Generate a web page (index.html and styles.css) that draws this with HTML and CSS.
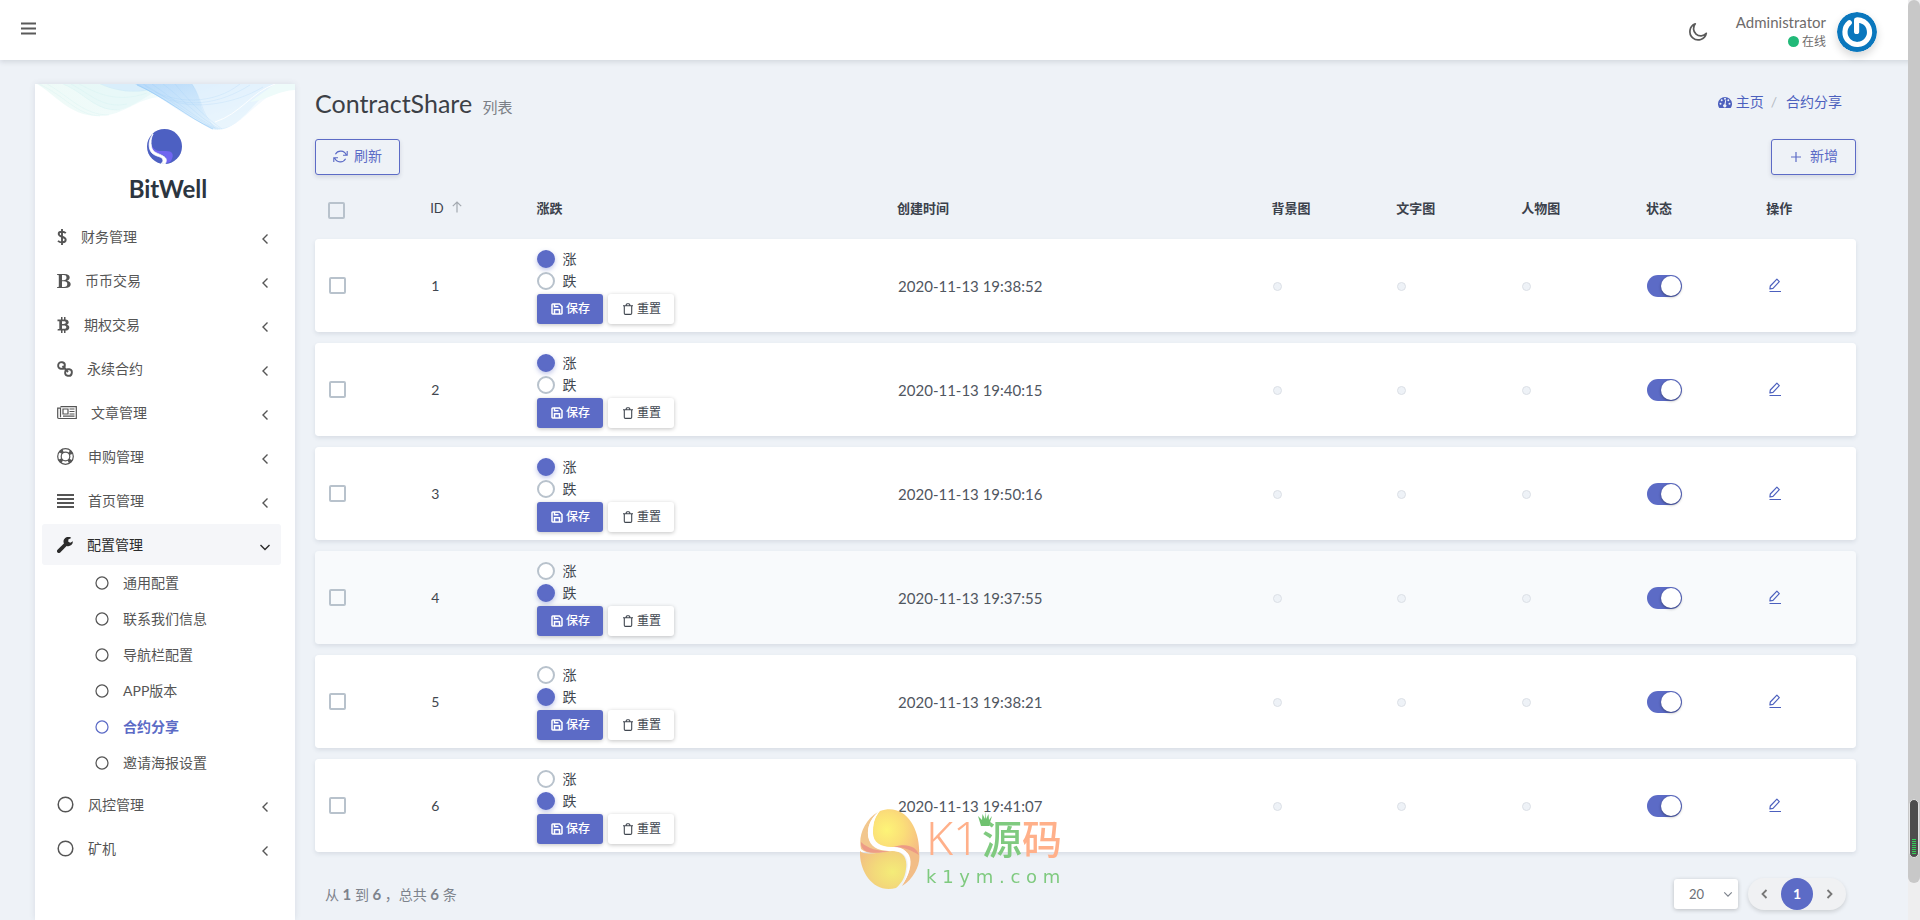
FILE: index.html
```html
<!DOCTYPE html>
<html lang="zh-CN">
<head>
<meta charset="utf-8">
<meta name="viewport" content="width=device-width, initial-scale=1">
<title>ContractShare</title>
<link rel="stylesheet" href="styles.css">
</head>
<body>
<svg class="sprite" aria-hidden="true">
  <symbol id="i-left" viewBox="0 0 12 12"><path d="M8.5 1.5 4 6l4.5 4.5" fill="none" stroke="currentColor" stroke-width="1.4"/></symbol>
  <symbol id="i-down" viewBox="0 0 12 12"><path d="M1.5 4 6 8.5 10.500 4" fill="none" stroke="currentColor" stroke-width="1.4"/></symbol>
  <symbol id="i-circle" viewBox="0 0 17 17"><circle cx="8.500" cy="8.500" r="7.300" fill="none" stroke="currentColor" stroke-width="1.5"/></symbol>
  <symbol id="i-save" viewBox="0 0 12 12"><path d="M1.700 1h6.800L11 3.500v6.800a.7.7 0 0 1-.7.7H1.700a.7.7 0 0 1-.7-.7V1.700A.7.7 0 0 1 1.700 1zM3.500 11V6.800h5V11M3.500 1v2.800h4" fill="none" stroke="currentColor" stroke-width="1.5"/></symbol>
  <symbol id="i-trash" viewBox="0 0 12 12"><path d="M1 2.800h10M2.300 2.800v7.500q0 1.100 1.100 1.100h5.200q1.100 0 1.100-1.100V2.800M4.200 2.600V1.800q0-1 1-1h1.600q1 0 1 1v.8" fill="none" stroke="currentColor" stroke-width="1.100"/></symbol>
  <symbol id="i-edit" viewBox="0 0 14 15"><path d="M8.900 1.200 11.300 3.600 5 10.300 1.900 11 2.300 8zM1.500 13.500h11.500" fill="none" stroke="currentColor" stroke-width="1.200" stroke-linejoin="round"/></symbol>
</svg>

<header class="topbar">
  <button class="icon-btn" type="button" aria-label="菜单">
    <svg width="15" height="13" viewBox="0 0 15 13"><path d="M0 1.500h15M0 6.500h15M0 11.500h15" stroke="currentColor" stroke-width="2"/></svg>
  </button>
  <div class="topbar-right">
    <button class="icon-btn" type="button" aria-label="夜间模式">
      <svg width="20" height="20" viewBox="0 0 20 20"><path d="M7.300 1.800A8.300 8.300 0 1 0 18.300 11.300 6.600 6.600 0 0 1 7.300 1.800z" fill="none" stroke="currentColor" stroke-width="1.700" stroke-linejoin="round"/></svg>
    </button>
    <div class="user">
      <span class="user-name">Administrator</span>
      <span class="user-status"><i class="dot"></i>在线</span>
    </div>
    <svg class="avatar" width="40" height="40" viewBox="0 0 40 40"><circle cx="20" cy="20" r="20" fill="#0a77bd"/><path d="M12.300 10.800A12.300 12.300 0 1 0 27 9.900Q22.500 7.500 19.600 8v11.500" fill="none" stroke="#fff" stroke-width="5.200" stroke-linecap="round" stroke-linejoin="round"/></svg>
  </div>
</header>

<div class="layout">
  <aside class="sidebar">
    <svg class="waves" viewBox="0 0 260 48" preserveAspectRatio="none" aria-hidden="true">
      <defs>
        <linearGradient id="wb" x1="0" y1="0" x2="1" y2="1"><stop offset="0" stop-color="#b7dafa"/><stop offset=".6" stop-color="#d9edfc"/><stop offset="1" stop-color="#e8f5fe"/></linearGradient>
        <linearGradient id="wg" x1="0" y1="0" x2="1" y2="0"><stop offset="0" stop-color="#eefaf7"/><stop offset="1" stop-color="#f3fcfe"/></linearGradient>
      </defs>
      <path d="M2 0C20 10 35 33 65 32 90 31 100 15 125 13L180 10V0z" fill="url(#wg)"/>
      <path d="M28 0C50 9 60 27 82 26 100 24 112 9 130 4V0z" fill="#e4f6f6" opacity=".7"/>
      <path d="M65 0C85 9 100 9 120 5L130 0z" fill="#d9eefb"/>
      <path d="M100 0C125 12 150 30 176 45 206 52 222 6 248 0z" fill="url(#wb)"/>
      <path d="M157 0C167 14 163 26 179 43 206 52 222 6 260 2V0z" fill="#eef8fe" opacity=".65"/>
      <path d="M215 18C235 15 242 7 260 6V0h-20z" fill="#eefbfa"/>
      <g fill="none" stroke="#8cc2f3" stroke-width=".6" opacity=".28"><path d="M102 0C130 14 150 34 179 44M108 0C134 14 154 32 181 45M117 0C140 16 160 34 183 45M128 0C145 12 163 34 185 45M140 0C150 12 168 32 187 45M110 2C140 22 180 20 205 0M120 8C150 26 185 20 215 1M135 16C160 26 200 20 228 3M157 0C167 14 165 28 180 44"/></g>
      <path d="M102 1C130 13 152 33 178 45" fill="none" stroke="#8cc6f6" stroke-width=".8" opacity=".7"/>
      <g fill="none" stroke="#bce8e6" stroke-width=".5" opacity=".35"><path d="M4 0C30 12 42 31 65 32M12 0C34 12 48 31 74 31M28 0C50 9 60 27 85 26M36 0C55 10 68 25 92 20M44 0C60 8 80 20 112 9M65 0C88 10 112 9 130 1"/></g>
      <path d="M180 38C205 30 217 8 240 0" fill="none" stroke="#fff" stroke-width="1" opacity=".9"/>
    </svg>
    <a class="brand" href="#">
      <svg width="35" height="35" viewBox="0 0 35 35"><circle cx="17.500" cy="17.500" r="17.500" fill="#4d60c2"/><path d="M5 17C8 23 14 22 19 22 25 22 28 25 24 32 22 34 20 34 18 34 22 26 15 26 10 24 6 22 5 20 5 17z" fill="#7065f0"/><path d="M6 5C1 11 1 20 5 24 9 28 15 27 16 31 16 33 15 34 14 34.600L18 35C20 32 20 29 16 27 11 24 6 24 4.500 18 3.500 13 4 9 6 5z" fill="#fff" stroke="#fff" stroke-width=".8"/></svg>
      <span>BitWell</span>
    </a>
    <nav>
      <ul class="menu">
        <li><a class="item" href="#"><svg width="10" height="18" viewBox="0 0 10 18"><path d="M8.800 5.200C7 3.300 1.700 3 1.700 6c0 3.300 7 2.200 7 5.700 0 3.200-5.500 3.300-7.700 1.200M5 1v16" fill="none" stroke="currentColor" stroke-width="1.900"/></svg><span>财务管理</span><svg class="arrow"><use href="#i-left"/></svg></a></li>
        <li><a class="item" href="#"><svg width="14" height="16" viewBox="0 0 14 16"><path d="M0 1h7.500C11 1 12.700 2.300 12.700 4.500c0 1.600-1 2.700-2.700 3.200 2.300.4 3.700 1.700 3.700 3.600C13.700 13.700 11.800 15 8 15H0v-.8l1.800-.4V2.200L0 1.800zM5 2v5.300h1.500c2 0 3-.9 3-2.700C9.500 2.800 8.600 2 6.700 2zm0 6.300V14h2c2.200 0 3.300-1 3.300-2.900S9.200 8.300 7 8.300z" fill="currentColor" fill-rule="evenodd"/></svg><span>币币交易</span><svg class="arrow"><use href="#i-left"/></svg></a></li>
        <li><a class="item" href="#"><svg width="13" height="16" viewBox="0 0 13 16"><path d="M4 0h1.500v2.500H7V0h1.500v2.600c2 .2 3.200 1.100 3.200 2.700 0 1.200-.7 2-1.700 2.400 1.500.4 2.300 1.300 2.300 2.700 0 2-1.400 3-3.800 3.200V16H7v-2.400H5.500V16H4v-2.400H.5l.3-1.700h1.500V4.300H.5V2.500H4zM5 4.300v2.700h1.500c1.500 0 2.300-.4 2.300-1.400S8 4.300 6.500 4.300zm0 4.300v3.200h1.800c1.600 0 2.500-.5 2.500-1.600S8.400 8.600 6.800 8.600z" fill="currentColor" fill-rule="evenodd"/></svg><span>期权交易</span><svg class="arrow"><use href="#i-left"/></svg></a></li>
        <li><a class="item" href="#"><svg width="16" height="16" viewBox="0 0 16 16"><g fill="none" stroke="currentColor" stroke-width="1.900"><rect x="1.200" y="1.200" width="6.600" height="6.600" rx="3" transform="rotate(8 4.500 4.500)"/><rect x="8.200" y="8.200" width="6.600" height="6.600" rx="3" transform="rotate(8 11.500 11.500)"/><path d="m5.500 5 5.500 6"/></g></svg><span>永续合约</span><svg class="arrow"><use href="#i-left"/></svg></a></li>
        <li><a class="item" href="#"><svg width="20" height="15" viewBox="0 0 20 15"><path d="M3.500 1.700h15.800V13.500H1.800Q.7 13.500.7 12.300V3.200h2.800v9" fill="none" stroke="currentColor" stroke-width="1.200"/><path d="M6 4h5v5H6zM12.500 4H17.500M12.500 6.500h5M12.500 9h5M6 11.200h11.500" fill="none" stroke="currentColor" stroke-width="1.200"/></svg><span>文章管理</span><svg class="arrow"><use href="#i-left"/></svg></a></li>
        <li><a class="item" href="#"><svg width="17" height="17" viewBox="0 0 17 17"><g fill="none" stroke="currentColor"><circle cx="8.500" cy="8.500" r="7.800" stroke-width="1.200"/><circle cx="8.500" cy="8.500" r="4.300" stroke-width="1.200"/><circle cx="8.500" cy="8.500" r="6.100" stroke-width="3.700" stroke-dasharray="3.300 6.282" stroke-dashoffset="-3.140"/></g></svg><span>申购管理</span><svg class="arrow"><use href="#i-left"/></svg></a></li>
        <li><a class="item" href="#"><svg width="17" height="15" viewBox="0 0 17 15"><path d="M0 2h17M0 6h17M0 10h17M0 14h17" stroke="currentColor" stroke-width="2"/></svg><span>首页管理</span><svg class="arrow"><use href="#i-left"/></svg></a></li>
        <li class="open">
          <a class="item" href="#"><svg width="16" height="16" viewBox="0 0 16 16"><path d="M1.900 14.100 9 7" stroke="currentColor" stroke-width="3.800" stroke-linecap="round"/><path d="M14.200.9 11.300 2.500v2.200l2 1.100 2.600-1.500A4.700 4.700 0 1 1 14.200.9z" fill="currentColor"/></svg><span>配置管理</span><svg class="arrow"><use href="#i-down"/></svg></a>
          <ul class="submenu">
            <li><a href="#"><svg><use href="#i-circle"/></svg><span>通用配置</span></a></li>
            <li><a href="#"><svg><use href="#i-circle"/></svg><span>联系我们信息</span></a></li>
            <li><a href="#"><svg><use href="#i-circle"/></svg><span>导航栏配置</span></a></li>
            <li><a href="#"><svg><use href="#i-circle"/></svg><span>APP版本</span></a></li>
            <li><a class="current" href="#"><svg><use href="#i-circle"/></svg><span>合约分享</span></a></li>
            <li><a href="#"><svg><use href="#i-circle"/></svg><span>邀请海报设置</span></a></li>
          </ul>
        </li>
        <li><a class="item" href="#"><svg width="17" height="17"><use href="#i-circle"/></svg><span>风控管理</span><svg class="arrow"><use href="#i-left"/></svg></a></li>
        <li><a class="item" href="#"><svg width="17" height="17"><use href="#i-circle"/></svg><span>矿机</span><svg class="arrow"><use href="#i-left"/></svg></a></li>
      </ul>
    </nav>
  </aside>

  <main class="content">
    <div class="page-head">
      <h1>ContractShare <small>列表</small></h1>
      <nav class="crumbs" aria-label="breadcrumb">
        <a href="#"><svg width="14" height="12" viewBox="0 0 14 12"><path d="M1.300 12A7 7 0 1 1 12.700 12z" fill="currentColor"/><g fill="#eef2f7"><circle cx="2.500" cy="7.800" r="1"/><circle cx="3.700" cy="4.300" r="1"/><circle cx="7" cy="2.700" r="1"/><circle cx="10.300" cy="4.300" r="1"/><circle cx="11.500" cy="7.800" r="1"/><path d="m8.200 4.200-.6 4.200a1.600 1.600 0 1 1-1.200-.2L7.300 4z"/></g></svg>主页</a>
        <span class="sep">/</span>
        <a href="#">合约分享</a>
      </nav>
    </div>

    <div class="toolbar">
      <button class="btn-outline" type="button"><svg width="15" height="13" viewBox="0 0 15 13"><path d="M13.300 5A6 6 0 0 0 2.400 4.300M1.700 8a6 6 0 0 0 10.900.7M14.200 1v4.200h-4.200M.8 12V7.800H5" fill="none" stroke="currentColor" stroke-width="1.100"/></svg>刷新</button>
      <button class="btn-outline" type="button"><svg width="15" height="13" viewBox="0 0 15 13"><path d="M7 2v10M2 7h10" stroke="currentColor" stroke-width="1.200"/></svg>新增</button>
    </div>

    <table class="grid">
      <colgroup><col class="c-check"><col class="c-id"><col class="c-trend"><col class="c-time"><col class="c-img"><col class="c-img"><col class="c-img"><col class="c-state"><col class="c-act"></colgroup>
      <thead>
        <tr><th><input class="check" type="checkbox" aria-label="全选"></th><th class="th-id">ID <svg width="10" height="12" viewBox="0 0 10 12"><path d="M5 11.500V1M.8 5.200 5 1l4.200 4.200" fill="none" stroke="#a3a9b0" stroke-width="1.200"/></svg></th><th>涨跌</th><th>创建时间</th><th>背景图</th><th>文字图</th><th>人物图</th><th>状态</th><th>操作</th></tr>
      </thead>
      <tbody>
        <tr>
          <td><input class="check" type="checkbox" aria-label="选择 1"></td><td>1</td>
          <td><form class="trend"><label><input type="radio" name="t1" checked>涨</label><label><input type="radio" name="t1">跌</label><div class="acts"><button class="btn-save" type="button"><svg><use href="#i-save"/></svg>保存</button><button class="btn-reset" type="button"><svg><use href="#i-trash"/></svg>重置</button></div></form></td>
          <td class="time">2020-11-13 19:38:52</td><td><span class="thumb"></span></td><td><span class="thumb"></span></td><td><span class="thumb"></span></td>
          <td><input class="switch" type="checkbox" aria-label="状态" checked></td><td><a class="edit" href="#" aria-label="编辑"><svg><use href="#i-edit"/></svg></a></td>
        </tr>
        <tr>
          <td><input class="check" type="checkbox" aria-label="选择 2"></td><td>2</td>
          <td><form class="trend"><label><input type="radio" name="t2" checked>涨</label><label><input type="radio" name="t2">跌</label><div class="acts"><button class="btn-save" type="button"><svg><use href="#i-save"/></svg>保存</button><button class="btn-reset" type="button"><svg><use href="#i-trash"/></svg>重置</button></div></form></td>
          <td class="time">2020-11-13 19:40:15</td><td><span class="thumb"></span></td><td><span class="thumb"></span></td><td><span class="thumb"></span></td>
          <td><input class="switch" type="checkbox" aria-label="状态" checked></td><td><a class="edit" href="#" aria-label="编辑"><svg><use href="#i-edit"/></svg></a></td>
        </tr>
        <tr>
          <td><input class="check" type="checkbox" aria-label="选择 3"></td><td>3</td>
          <td><form class="trend"><label><input type="radio" name="t3" checked>涨</label><label><input type="radio" name="t3">跌</label><div class="acts"><button class="btn-save" type="button"><svg><use href="#i-save"/></svg>保存</button><button class="btn-reset" type="button"><svg><use href="#i-trash"/></svg>重置</button></div></form></td>
          <td class="time">2020-11-13 19:50:16</td><td><span class="thumb"></span></td><td><span class="thumb"></span></td><td><span class="thumb"></span></td>
          <td><input class="switch" type="checkbox" aria-label="状态" checked></td><td><a class="edit" href="#" aria-label="编辑"><svg><use href="#i-edit"/></svg></a></td>
        </tr>
        <tr class="hovered">
          <td><input class="check" type="checkbox" aria-label="选择 4"></td><td>4</td>
          <td><form class="trend"><label><input type="radio" name="t4">涨</label><label><input type="radio" name="t4" checked>跌</label><div class="acts"><button class="btn-save" type="button"><svg><use href="#i-save"/></svg>保存</button><button class="btn-reset" type="button"><svg><use href="#i-trash"/></svg>重置</button></div></form></td>
          <td class="time">2020-11-13 19:37:55</td><td><span class="thumb"></span></td><td><span class="thumb"></span></td><td><span class="thumb"></span></td>
          <td><input class="switch" type="checkbox" aria-label="状态" checked></td><td><a class="edit" href="#" aria-label="编辑"><svg><use href="#i-edit"/></svg></a></td>
        </tr>
        <tr>
          <td><input class="check" type="checkbox" aria-label="选择 5"></td><td>5</td>
          <td><form class="trend"><label><input type="radio" name="t5">涨</label><label><input type="radio" name="t5" checked>跌</label><div class="acts"><button class="btn-save" type="button"><svg><use href="#i-save"/></svg>保存</button><button class="btn-reset" type="button"><svg><use href="#i-trash"/></svg>重置</button></div></form></td>
          <td class="time">2020-11-13 19:38:21</td><td><span class="thumb"></span></td><td><span class="thumb"></span></td><td><span class="thumb"></span></td>
          <td><input class="switch" type="checkbox" aria-label="状态" checked></td><td><a class="edit" href="#" aria-label="编辑"><svg><use href="#i-edit"/></svg></a></td>
        </tr>
        <tr>
          <td><input class="check" type="checkbox" aria-label="选择 6"></td><td>6</td>
          <td><form class="trend"><label><input type="radio" name="t6">涨</label><label><input type="radio" name="t6" checked>跌</label><div class="acts"><button class="btn-save" type="button"><svg><use href="#i-save"/></svg>保存</button><button class="btn-reset" type="button"><svg><use href="#i-trash"/></svg>重置</button></div></form></td>
          <td class="time">2020-11-13 19:41:07</td><td><span class="thumb"></span></td><td><span class="thumb"></span></td><td><span class="thumb"></span></td>
          <td><input class="switch" type="checkbox" aria-label="状态" checked></td><td><a class="edit" href="#" aria-label="编辑"><svg><use href="#i-edit"/></svg></a></td>
        </tr>
      </tbody>
    </table>

    <footer class="pager">
      <p>从 <b>1</b> 到 <b>6</b> ，总共 <b>6</b> 条</p>
      <div class="pager-right">
        <span class="select"><select aria-label="每页条数"><option>20</option></select><svg><use href="#i-down"/></svg></span>
        <div class="pages">
          <a href="#" aria-label="上一页"><svg width="9" height="10" viewBox="0 0 9 10"><path d="M6.500 1 2.500 5l4 4" fill="none" stroke="currentColor" stroke-width="1.800"/></svg></a>
          <a class="on" href="#">1</a>
          <a href="#" aria-label="下一页"><svg width="9" height="10" viewBox="0 0 9 10"><path d="m2.500 1 4 4-4 4" fill="none" stroke="currentColor" stroke-width="1.800"/></svg></a>
        </div>
      </div>
    </footer>
  </main>
</div>

<div class="mark">
  <svg width="60" height="80" viewBox="0 0 60 80">
    <defs>
      <radialGradient id="e1" cx=".3" cy=".45" r=".8"><stop offset="0" stop-color="#fdf477"/><stop offset=".45" stop-color="#fbdf78"/><stop offset="1" stop-color="#f6bb84"/></radialGradient>
      <radialGradient id="e2" cx=".7" cy=".55" r=".8"><stop offset="0" stop-color="#f4ec78"/><stop offset=".5" stop-color="#f3d97a"/><stop offset="1" stop-color="#f2c083"/></radialGradient>
    </defs>
    <path d="M18 3C4 11-2 28 1 40 9 47 23 43 36 42 20 41 8 37 8 24 8 14 13 8 18 3z" fill="#f2c78e"/>
    <path d="M20 2C45-7 61 20 59 46 56 37 45 36 34 38 22 39 12 34 13 22 13 12 16 6 20 2z" fill="url(#e1)"/>
    <path d="M0 42C5 47 20 43 32 42 42 42 48 48 46 60 45 69 41 75 36 79 13 85-1 62 0 42z" fill="url(#e2)"/>
    <path d="M30 38C44 36 51 45 50 57 49 66 45 72 42 77 55 69 61 54 59 44 55 36 44 35 30 38z" fill="#f2bd87"/>
    <path d="M1 36C3 46 18 44 30 42.500 18 42 8 40 1 33zM34 38C46 34 56 37 59 46 51 41 44 38 34 38z" fill="#eb9184" opacity=".8"/>
    <path d="M20 2C8 10 8 29 12 34 20 45 33 35 44 44 54 52 46 70 42 77 56 54 49 40 34 39 18 38 12 34 12 22 12 12 16 6 20 2z" fill="#fff"/>
    <path d="M19 3C9 10 6 22 9 31 12 40 22 42 32 42 44 42 50 49 47 62 46 69 44 73 41 77 49 67 53 54 49 46 45 39 36 38 28 38.500 16 38 12 31 13 21 13 13 16 7 19 3z" fill="#fff"/>
  </svg>
  <div class="mark-text">
    <div class="mark-top"><span class="k1">K1</span><span class="yuan">源</span><span class="ma">码</span>
      <svg class="crown" width="14" height="16" viewBox="0 0 14 16"><path d="M3 15 0 5l4 4 .5-6L7 8V0l1 8 2.500-5 .5 6L14 5l-3 10z" fill="#6fc26f"/></svg>
    </div>
    <div class="mark-sub">k 1 y m . c o m</div>
  </div>
</div>

<div class="rail" aria-hidden="true"><div class="rail-thumb"></div><div class="battery"><i></i></div></div>
</body>
</html>
```
FILE: styles.css
```css
* { box-sizing: border-box; }
:root {
  --primary: #5c6bc6;
  --link: #4c60be;
  --bg: #eef2f7;
  --text: #414750;
}
body {
  margin: 0;
  min-height: 100vh;
  display: flex;
  flex-direction: column;
  background: var(--bg);
  color: var(--text);
  font: 14px/20px Lato, "Noto Sans CJK SC", sans-serif;
}
a { color: inherit; text-decoration: none; }
ul { list-style: none; margin: 0; padding: 0; }
button, select, input { font: inherit; margin: 0; }
svg { flex: none; display: block; }
.sprite { position: absolute; width: 0; height: 0; }

.topbar {
  height: 60px;
  display: flex;
  justify-content: space-between;
  align-items: center;
  padding: 0 43px 0 21px;
  background: #fff;
  box-shadow: 0 2px 5px rgba(40, 50, 70, .14);
  z-index: 1;
}
.icon-btn { border: 0; padding: 0; background: none; color: #5a5a5a; }
.topbar > .icon-btn { margin-bottom: 4px; }
.topbar-right { display: flex; align-items: center; gap: 11px; margin-top: 4px; }
.topbar-right .icon-btn { margin-right: 17px; }
.user { display: flex; flex-direction: column; align-items: flex-end; color: #6e6b6b; }
.user-name { font-size: 15px; line-height: 19px; }
.user-status { display: flex; align-items: center; gap: 3px; font-size: 12px; line-height: 19px; }
.dot { width: 11px; height: 11px; border-radius: 50%; background: #21b978; }
.avatar { border-radius: 50%; box-shadow: 0 4px 8px rgba(0, 0, 0, .16); }

.layout { flex: 1; display: flex; gap: 20px; padding: 0 64px 0 35px; }

.sidebar {
  width: 260px;
  flex: none;
  margin-top: 24px;
  background: #fff;
  box-shadow: 0 0 6px rgba(60, 70, 100, .12);
  position: relative;
}
.waves { position: absolute; top: 0; left: 0; width: 100%; height: 48px; }
.brand {
  position: relative;
  height: 132px;
  padding: 45px 0 0 6px;
  display: flex;
  flex-direction: column;
  align-items: center;
  gap: 11px;
  color: #2c3540;
  font-size: 24px;
  line-height: 28px;
  font-weight: 700;
}
.brand svg { margin-right: 8px; }
.menu { padding: 0 14px 0 7px; display: flex; flex-direction: column; gap: 3px; }
.item {
  height: 41px;
  display: flex;
  align-items: center;
  gap: 14px;
  padding: 0 10px 0 15px;
  border-radius: 3px;
  color: #555;
}
.item .arrow { width: 12px; height: 12px; margin: 4px 0 0 auto; }
.open > .item { background: #f5f6f9; color: #2b2b2b; }
.submenu a { height: 36px; display: flex; align-items: center; gap: 14px; padding-left: 53px; color: #555; }
.submenu svg { width: 14px; height: 14px; }
.submenu .current { color: var(--primary); font-weight: 700; }

.content { flex: 1; min-width: 0; padding-top: 30px; }
.page-head { display: flex; justify-content: space-between; align-items: center; height: 30px; padding-right: 14px; }
h1 { margin: 0; font-size: 25px; line-height: 30px; font-weight: 400; color: #3c4046; }
h1 small { font-size: 15px; color: #7b7f86; margin-left: 4px; }
.crumbs { display: flex; gap: 7px; color: var(--link); padding-bottom: 7px; }
.crumbs a { display: flex; align-items: center; gap: 4px; }
.sep { color: #b5bac2; margin-right: 2px; }

.toolbar { display: flex; justify-content: space-between; margin: 19px 0 4px; }
.btn-outline {
  height: 36px;
  display: flex;
  align-items: center;
  gap: 6px;
  padding: 0 17px 2px;
  border: 1px solid var(--primary);
  border-radius: 3px;
  background: var(--bg);
  color: var(--primary);
  box-shadow: 0 2px 4px rgba(60, 70, 100, .16);
}

.grid { width: 100%; table-layout: fixed; border-collapse: separate; border-spacing: 0 11px; margin: -11px 0 0; padding-top: 11px; }
.c-check { width: 6.5%; }
.c-id { width: 6.9%; }
.c-trend { width: 23.4%; }
.c-time { width: 24.3%; }
.c-img { width: 8.1%; }
.c-state { width: 7.8%; }
.c-act { width: 6.8%; }
th { height: 38px; padding: 0 15px 2px; text-align: left; font-size: 13px; line-height: 18px; font-weight: 600; color: #3b414b; }
.th-id { font-weight: 400; }
.th-id svg { display: inline-block; margin-left: 5px; }
th:first-child { padding: 2px 13px 0; }
td { padding: 8px 16px; background: #fff; }
td:first-child { padding-left: 14px; border-radius: 4px 0 0 4px; }
td:last-child { padding-left: 17px; border-radius: 0 4px 4px 0; }
tbody tr { border-radius: 4px; box-shadow: 0 2px 4px rgba(60, 70, 100, .12); }
.hovered td { background: #f8fafc; }
.time { font-size: 15px; color: #50565f; }

.check, .trend input, .switch { appearance: none; display: block; }
.check { width: 17px; height: 17px; border: 2px solid #b8c2cc; border-radius: 2px; }
.trend label { display: flex; align-items: center; gap: 7px; height: 22px; }
.trend input { width: 18px; height: 18px; border: 2px solid #b8c2cc; border-radius: 50%; background: #fff; }
.trend input:checked { border-color: var(--primary); background: var(--primary); box-shadow: 0 2px 5px rgba(92, 107, 198, .4); }
.trend { padding-top: 1px; }
.acts { display: flex; gap: 5px; margin-top: 2px; }
.acts button {
  height: 30px;
  width: 66px;
  display: flex;
  align-items: center;
  justify-content: center;
  gap: 3px;
  padding: 0;
  border: 0;
  border-radius: 3px;
  font-size: 12px;
  box-shadow: 0 1px 4px rgba(0, 0, 0, .24);
}
.acts svg { width: 12px; height: 12px; }
.acts .btn-save { background: var(--primary); color: #fff; font-weight: 500; }
.acts .btn-reset { background: #fff; color: var(--text); }
.thumb { display: block; width: 9px; height: 9px; margin: 2px 0 0; border: 1px solid #dce0e6; border-radius: 50%; background: var(--bg); }
.switch { width: 35px; height: 22px; padding: 1px; border-radius: 11px; background: var(--primary); }
.switch::before { content: ""; display: block; width: 20px; height: 20px; margin-left: auto; border-radius: 50%; background: #fff; box-shadow: 0 1px 3px rgba(0, 0, 0, .4); }
.edit { color: var(--link); }
.edit svg { width: 14px; height: 15px; }

.pager { display: flex; justify-content: space-between; align-items: center; padding: 15px 10px 4px; color: #7d838c; }
.pager p { margin: 0; font-size: 14px; }
.pager b { font-size: 15px; }
.pager-right { display: flex; align-items: center; gap: 10px; }
.select { position: relative; }
.select select { display: block; appearance: none; width: 64px; height: 30px; padding: 0 15px; border: 0; border-radius: 3px; background: #fff; color: #6b6f76; font-size: 13px; box-shadow: 0 1px 4px rgba(0, 0, 0, .22); }
.select svg { position: absolute; right: 5px; top: 10px; width: 10px; height: 10px; pointer-events: none; }
.pages { display: flex; align-items: center; border-radius: 16px; background: #f0f1f3; box-shadow: 0 2px 4px rgba(0, 0, 0, .14); }
.pages a { width: 33px; height: 32px; display: flex; align-items: center; justify-content: center; color: #777; }
.pages .on { width: 32px; border-radius: 16px; background: var(--primary); color: #fff; font-weight: 700; }

.mark { position: fixed; left: 860px; top: 809px; display: flex; gap: 6px; pointer-events: none; z-index: 2; }
.mark-text { position: relative; color: #7fca7f; }
.mark-top { display: flex; align-items: center; height: 56px; font-size: 40px; line-height: 56px; }
.k1 { width: 56px; color: #ffb08a; font-family: "Noto Sans", sans-serif; font-weight: 300; font-size: 46px; }
.yuan, .ma { font-family: "Noto Sans CJK SC", sans-serif; font-weight: 500; }
.ma { color: #ffb08a; }
.crown { position: absolute; left: 52px; top: 2px; }
.mark-sub { font: 18px/20px "DejaVu Sans", sans-serif; padding-top: 2px; white-space: nowrap; }

.rail { position: fixed; top: 0; right: 0; bottom: 0; width: 12px; background: #eeeeef; z-index: 3; }
.rail-thumb { height: 96%; border-radius: 6px; background: #c8c8c8; }
.battery { position: absolute; left: 1px; bottom: 62px; width: 10px; height: 59px; padding: 0 2px 2px; display: flex; align-items: flex-end; border: 1px solid #e2e2e2; border-radius: 5px; background: #4d4d4d; }
.battery i { width: 100%; height: 16px; background: repeating-linear-gradient(#34d058 0 1px, #4d4d4d 1px 2px); }
```
